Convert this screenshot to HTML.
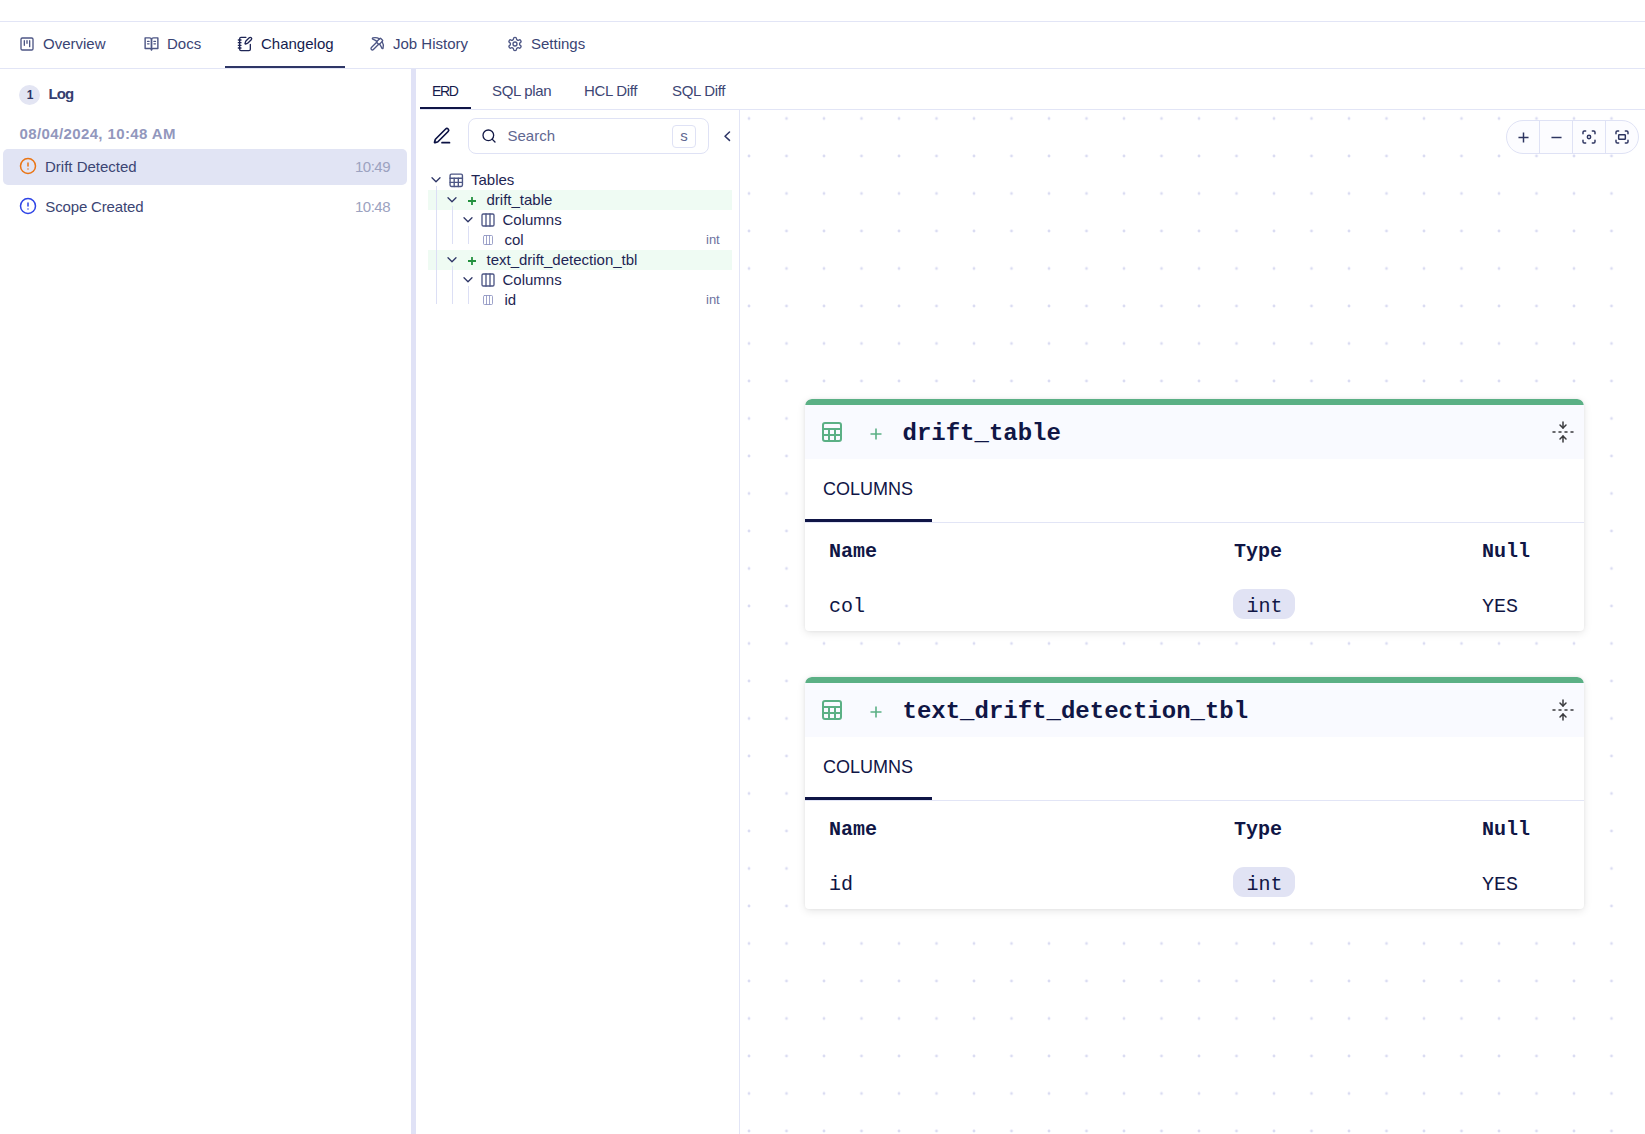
<!DOCTYPE html>
<html><head><meta charset="utf-8">
<style>
html,body{margin:0;padding:0;}
body{width:1645px;height:1134px;overflow:hidden;background:#fff;position:relative;font-family:"Liberation Sans",sans-serif;}
.a{position:absolute;white-space:nowrap;}
.hl{position:absolute;height:1px;background:#e2e5f6;}
.vl{position:absolute;width:1px;background:#e2e5f6;}
.nav{font-size:15px;line-height:15px;color:#3a4474;}
.ico{position:absolute;}
svg{display:block;overflow:visible;}
.sub{font-size:15px;line-height:15px;color:#3d4674;letter-spacing:-0.35px;}
.li{font-size:15px;line-height:15px;color:#3b4573;}
.tm{font-size:15px;line-height:15px;color:#9ca2c0;width:100px;text-align:right;letter-spacing:-0.5px;}
.tr{font-size:15px;line-height:15px;color:#1e2553;}
.mono{font-family:"Liberation Mono",monospace;}
.card{background:#fff;border-radius:7px 7px 4px 4px;box-shadow:0 2px 9px rgba(0,0,0,0.10),0 0 3px rgba(0,0,0,0.06);overflow:hidden;}
</style></head>
<body>
<!-- top lines -->
<div class="hl" style="left:0;top:21px;width:1645px;"></div>
<div class="hl" style="left:0;top:68px;width:1645px;"></div>

<!-- NAV -->
<div class="ico" style="left:19px;top:36px;"><svg width="16" height="16" viewBox="0 0 24 24" fill="none" stroke="#4d5685" stroke-width="2" stroke-linecap="round" stroke-linejoin="round"><rect width="18" height="18" x="3" y="3" rx="2"/><path d="M8 7v7"/><path d="M12 7v4"/><path d="M16 7v9"/></svg></div>
<div class="a nav" style="left:43px;top:35.5px;">Overview</div>

<div class="ico" style="left:142.5px;top:35px;"><svg width="17" height="17" viewBox="0 0 24 24" fill="none" stroke="#4d5685" stroke-width="2" stroke-linecap="round" stroke-linejoin="round"><path d="M3 4h6a3 3 0 0 1 3 3v14a2 2 0 0 0-2-2H3z"/><path d="M21 4h-6a3 3 0 0 0-3 3v14a2 2 0 0 1 2-2h7z"/><path d="M6.5 9h2"/><path d="M6.5 12.5h2"/><path d="M15.5 9h2"/><path d="M15.5 12.5h2"/></svg></div>
<div class="a nav" style="left:167px;top:35.5px;">Docs</div>

<div class="ico" style="left:237px;top:36px;"><svg width="16" height="16" viewBox="0 0 24 24" fill="none" stroke="#1f2656" stroke-width="2" stroke-linecap="round" stroke-linejoin="round"><path d="M13.4 2H6a2 2 0 0 0-2 2v16a2 2 0 0 0 2 2h12a2 2 0 0 0 2-2v-7.4"/><path d="M2 6h4"/><path d="M2 10h4"/><path d="M2 14h4"/><path d="M2 18h4"/><path d="M21.378 5.626a1 1 0 1 0-3.004-3.004l-5.01 5.012a2 2 0 0 0-.506.854l-.837 2.87a.5.5 0 0 0 .62.62l2.87-.837a2 2 0 0 0 .854-.506z"/></svg></div>
<div class="a nav" style="left:261px;top:35.5px;color:#151c4e;">Changelog</div>
<div class="a" style="left:225px;top:66px;width:120px;height:2px;background:#2e3666;"></div>

<div class="ico" style="left:369px;top:36px;"><svg width="16" height="16" viewBox="0 0 24 24" fill="none" stroke="#4d5685" stroke-width="2" stroke-linecap="round" stroke-linejoin="round"><path d="M14.531 12.469 6.619 20.38a1 1 0 1 1-3-3l7.912-7.912"/><path d="M15.686 4.314A12.5 12.5 0 0 0 5.461 2.958 1 1 0 0 0 5.58 4.71a22 22 0 0 1 6.318 3.393"/><path d="M17.7 3.7a1 1 0 0 0-1.4 0l-4.6 4.6a1 1 0 0 0 0 1.4l2.6 2.6a1 1 0 0 0 1.4 0l4.6-4.6a1 1 0 0 0 0-1.4z"/><path d="M19.686 8.314a12.501 12.501 0 0 1 1.356 10.225 1 1 0 0 1-1.751-.119 22 22 0 0 0-3.393-6.319"/></svg></div>
<div class="a nav" style="left:393px;top:35.5px;">Job History</div>

<div class="ico" style="left:507px;top:36px;"><svg width="16" height="16" viewBox="0 0 24 24" fill="none" stroke="#4d5685" stroke-width="2" stroke-linecap="round" stroke-linejoin="round"><path d="M12.22 2h-.44a2 2 0 0 0-2 2v.18a2 2 0 0 1-1 1.73l-.43.25a2 2 0 0 1-2 0l-.15-.08a2 2 0 0 0-2.730.73l-.22.38a2 2 0 0 0 .73 2.73l.15.1a2 2 0 0 1 1 1.72v.51a2 2 0 0 1-1 1.74l-.15.09a2 2 0 0 0-.73 2.73l.22.38a2 2 0 0 0 2.73.73l.15-.08a2 2 0 0 1 2 0l.43.25a2 2 0 0 1 1 1.73V20a2 2 0 0 0 2 2h.44a2 2 0 0 0 2-2v-.18a2 2 0 0 1 1-1.73l.43-.25a2 2 0 0 1 2 0l.15.08a2 2 0 0 0 2.73-.73l.22-.39a2 2 0 0 0-.73-2.73l-.15-.08a2 2 0 0 1-1-1.74v-.5a2 2 0 0 1 1-1.74l.15-.09a2 2 0 0 0 .73-2.73l-.22-.38a2 2 0 0 0-2.73-.73l-.15.08a2 2 0 0 1-2 0l-.43-.25a2 2 0 0 1-1-1.73V4a2 2 0 0 0-2-2z"/><circle cx="12" cy="12" r="3"/></svg></div>
<div class="a nav" style="left:531px;top:35.5px;">Settings</div>

<!-- LEFT PANEL -->
<div class="a" style="left:19px;top:85px;width:21px;height:20px;border-radius:50%;background:#e3e5f3;"></div>
<div class="a" style="left:20px;top:89px;width:20px;text-align:center;font-size:12px;line-height:12px;font-weight:bold;color:#2d3566;">1</div>
<div class="a" style="left:48.5px;top:86px;font-size:15px;line-height:15px;font-weight:bold;color:#353e6f;letter-spacing:-0.9px;">Log</div>
<div class="a" style="left:19.5px;top:126px;font-size:15px;line-height:15px;font-weight:bold;color:#9297bd;letter-spacing:0.38px;">08/04/2024, 10:48 AM</div>

<div class="a" style="left:3px;top:149px;width:404px;height:36px;border-radius:5px;background:#e1e4f4;"></div>
<div class="ico" style="left:19px;top:157px;"><svg width="18" height="18" viewBox="0 0 24 24" fill="none" stroke="#ea7413" stroke-width="2" stroke-linecap="round" stroke-linejoin="round"><circle cx="12" cy="12" r="10"/><line x1="12" x2="12" y1="8" y2="12"/><line x1="12" x2="12.01" y1="16" y2="16"/></svg></div>
<div class="a li" style="left:45px;top:158.6px;">Drift Detected</div>
<div class="a tm" style="left:290px;top:158.8px;">10:49</div>

<div class="ico" style="left:19px;top:197px;"><svg width="18" height="18" viewBox="0 0 24 24" fill="none" stroke="#2e44e6" stroke-width="2" stroke-linecap="round" stroke-linejoin="round"><circle cx="12" cy="12" r="10"/><line x1="12" x2="12" y1="8" y2="12"/><line x1="12" x2="12.01" y1="16" y2="16"/></svg></div>
<div class="a li" style="left:45.3px;top:198.6px;letter-spacing:-0.15px;">Scope Created</div>
<div class="a tm" style="left:290px;top:198.8px;">10:48</div>

<!-- splitter -->
<div class="a" style="left:411px;top:69px;width:5px;height:1065px;background:#e0e2f6;"></div>

<!-- SUB TABS -->
<div class="hl" style="left:420px;top:109px;width:1225px;"></div>
<div class="a sub" style="left:432px;top:83.8px;color:#151b4b;font-size:14px;letter-spacing:-1.3px;">ERD</div>
<div class="a" style="left:420px;top:107px;width:51px;height:2px;background:#0f1546;"></div>
<div class="a sub" style="left:492px;top:83.3px;">SQL plan</div>
<div class="a sub" style="left:584px;top:83.3px;">HCL Diff</div>
<div class="a sub" style="left:672px;top:83.3px;">SQL Diff</div>

<!-- TREE PANEL -->
<div class="vl" style="left:739px;top:110px;height:1024px;"></div>
<div class="ico" style="left:432px;top:125.5px;"><svg width="20" height="20" viewBox="0 0 24 24" fill="none" stroke="#0c1244" stroke-width="2" stroke-linecap="round" stroke-linejoin="round"><path d="M12 20h9"/><path d="M16.376 3.622a1 1 0 0 1 3.002 3.002L7.368 18.635a2 2 0 0 1-.855.506l-2.872.838a.5.5 0 0 1-.62-.62l.838-2.872a2 2 0 0 1 .506-.854z"/></svg></div>
<div class="a" style="left:468px;top:118px;width:239px;height:34px;border:1px solid #dfe2f5;border-radius:8px;"></div>
<div class="ico" style="left:480.7px;top:127.6px;"><svg width="16" height="16" viewBox="0 0 24 24" fill="none" stroke="#141a46" stroke-width="2" stroke-linecap="round" stroke-linejoin="round"><circle cx="11" cy="11" r="8"/><path d="m21 21-4.3-4.3"/></svg></div>
<div class="a" style="left:507.5px;top:128px;font-size:15px;line-height:15px;color:#5f6791;">Search</div>
<div class="a" style="left:672px;top:125px;width:22px;height:21px;border:1px solid #dfe2f5;border-radius:4px;"></div>
<div class="a" style="left:672px;top:128px;width:24px;text-align:center;font-size:15px;line-height:15px;color:#5f6791;">s</div>
<div class="ico" style="left:722px;top:131px;"><svg width="10" height="10" viewBox="0 0 10 10" fill="none" stroke="#2d3566" stroke-width="1.5" stroke-linecap="round" stroke-linejoin="round"><path d="M7.5 1 3 5.2 7.5 9.4"/></svg></div>

<div class="a" style="left:428px;top:190px;width:304px;height:20px;background:#effbf3;"></div>
<div class="a" style="left:428px;top:250px;width:304px;height:20px;background:#effbf3;"></div>
<div class="vl" style="left:436px;top:186px;height:118px;background:#dcdff5;"></div>
<div class="vl" style="left:452px;top:206px;height:38px;background:#dcdff5;"></div>
<div class="vl" style="left:468px;top:226px;height:18px;background:#dcdff5;"></div>
<div class="vl" style="left:452px;top:266px;height:38px;background:#dcdff5;"></div>
<div class="vl" style="left:468px;top:286px;height:18px;background:#dcdff5;"></div>
<div class="ico" style="left:431px;top:177px;"><svg width="10" height="6" viewBox="0 0 10 6" fill="none" stroke="#2d3566" stroke-width="1.3" stroke-linecap="round" stroke-linejoin="round"><path d="M1 0.8 5 4.8 9 0.8"/></svg></div>
<div class="ico" style="left:447.8px;top:171.6px;"><svg width="16.5" height="16.5" viewBox="0 0 24 24" fill="none" stroke="#4d5685" stroke-width="2" stroke-linecap="round" stroke-linejoin="round"><rect width="18" height="18" x="3" y="3" rx="2"/><path d="M3 9h18"/><path d="M3 15h18"/><path d="M9 9v12"/><path d="M15 9v12"/></svg></div>
<div class="a tr" style="left:471px;top:172px;">Tables</div>
<div class="ico" style="left:447px;top:197px;"><svg width="10" height="6" viewBox="0 0 10 6" fill="none" stroke="#2d3566" stroke-width="1.3" stroke-linecap="round" stroke-linejoin="round"><path d="M1 0.8 5 4.8 9 0.8"/></svg></div>
<div class="ico" style="left:468px;top:197px;"><svg width="8" height="8" viewBox="0 0 8 8" fill="none" stroke="#23913f" stroke-width="1.8"><path d="M4 0v8M0 4h8"/></svg></div>
<div class="a tr" style="left:486.5px;top:192px;">drift_table</div>
<div class="ico" style="left:463px;top:217px;"><svg width="10" height="6" viewBox="0 0 10 6" fill="none" stroke="#2d3566" stroke-width="1.3" stroke-linecap="round" stroke-linejoin="round"><path d="M1 0.8 5 4.8 9 0.8"/></svg></div>
<div class="ico" style="left:480px;top:211.8px;"><svg width="16" height="16" viewBox="0 0 24 24" fill="none" stroke="#4d5685" stroke-width="2" stroke-linecap="round" stroke-linejoin="round"><rect width="18" height="18" x="3" y="3" rx="2"/><path d="M9 3v18"/><path d="M15 3v18"/></svg></div>
<div class="a tr" style="left:502.5px;top:212px;">Columns</div>
<div class="ico" style="left:482px;top:234px;"><svg width="12" height="12" viewBox="0 0 24 24" fill="none" stroke="#8d92c0" stroke-width="1.7" stroke-linecap="round" stroke-linejoin="round"><rect width="18" height="18" x="3" y="3" rx="2"/><path d="M9 3v18"/><path d="M15 3v18"/></svg></div>
<div class="a tr" style="left:504.5px;top:232px;">col</div>
<div class="a" style="left:706px;top:233px;font-size:13px;line-height:13px;color:#6c72a0;">int</div>
<div class="ico" style="left:447px;top:257px;"><svg width="10" height="6" viewBox="0 0 10 6" fill="none" stroke="#2d3566" stroke-width="1.3" stroke-linecap="round" stroke-linejoin="round"><path d="M1 0.8 5 4.8 9 0.8"/></svg></div>
<div class="ico" style="left:468px;top:257px;"><svg width="8" height="8" viewBox="0 0 8 8" fill="none" stroke="#23913f" stroke-width="1.8"><path d="M4 0v8M0 4h8"/></svg></div>
<div class="a tr" style="left:486.5px;top:252px;">text_drift_detection_tbl</div>
<div class="ico" style="left:463px;top:277px;"><svg width="10" height="6" viewBox="0 0 10 6" fill="none" stroke="#2d3566" stroke-width="1.3" stroke-linecap="round" stroke-linejoin="round"><path d="M1 0.8 5 4.8 9 0.8"/></svg></div>
<div class="ico" style="left:480px;top:271.8px;"><svg width="16" height="16" viewBox="0 0 24 24" fill="none" stroke="#4d5685" stroke-width="2" stroke-linecap="round" stroke-linejoin="round"><rect width="18" height="18" x="3" y="3" rx="2"/><path d="M9 3v18"/><path d="M15 3v18"/></svg></div>
<div class="a tr" style="left:502.5px;top:272px;">Columns</div>
<div class="ico" style="left:482px;top:294px;"><svg width="12" height="12" viewBox="0 0 24 24" fill="none" stroke="#8d92c0" stroke-width="1.7" stroke-linecap="round" stroke-linejoin="round"><rect width="18" height="18" x="3" y="3" rx="2"/><path d="M9 3v18"/><path d="M15 3v18"/></svg></div>
<div class="a tr" style="left:504.5px;top:292px;">id</div>
<div class="a" style="left:706px;top:293px;font-size:13px;line-height:13px;color:#6c72a0;">int</div>

<!-- CANVAS -->
<div id="canvas" class="a" style="left:740px;top:110px;width:905px;height:1024px;">
<svg width="905" height="1024" style="position:absolute;left:0;top:0;"><defs><pattern id="dots" x="9" y="8.5" width="37.5" height="37.5" patternUnits="userSpaceOnUse"><circle cx="0" cy="0" r="1.4" fill="#dadcf2"/><circle cx="37.5" cy="0" r="1.4" fill="#dadcf2"/><circle cx="0" cy="37.5" r="1.4" fill="#dadcf2"/><circle cx="37.5" cy="37.5" r="1.4" fill="#dadcf2"/></pattern></defs><rect width="905" height="1024" fill="url(#dots)"/></svg>
</div>
<div class="a" style="left:1506px;top:120px;width:131px;height:32px;border:1px solid #dfe2f5;border-radius:17px;background:#fcfcff;"></div>
<div class="vl" style="left:1539px;top:121px;height:32px;background:#dfe2f5;"></div>
<div class="vl" style="left:1572px;top:121px;height:32px;background:#dfe2f5;"></div>
<div class="vl" style="left:1605px;top:121px;height:32px;background:#dfe2f5;"></div>
<div class="ico" style="left:1517.5px;top:131.5px;"><svg width="11" height="11" viewBox="0 0 12 12" fill="none" stroke="#2d3460" stroke-width="1.6"><path d="M6 0.5v11M0.5 6h11"/></svg></div>
<div class="ico" style="left:1550.5px;top:131.5px;"><svg width="11" height="11" viewBox="0 0 12 12" fill="none" stroke="#2d3460" stroke-width="1.6"><path d="M0.5 6h11"/></svg></div>
<div class="ico" style="left:1581px;top:129px;"><svg width="16" height="16" viewBox="0 0 24 24" fill="none" stroke="#2d3460" stroke-width="2.2" stroke-linecap="round" stroke-linejoin="round"><circle cx="12" cy="12" r="2.5"/><path d="M3 7V5a2 2 0 0 1 2-2h2"/><path d="M17 3h2a2 2 0 0 1 2 2v2"/><path d="M21 17v2a2 2 0 0 1-2 2h-2"/><path d="M7 21H5a2 2 0 0 1-2-2v-2"/></svg></div>
<div class="ico" style="left:1614px;top:129px;"><svg width="16" height="16" viewBox="0 0 24 24" fill="none" stroke="#2d3460" stroke-width="2.2" stroke-linecap="round" stroke-linejoin="round"><path d="M3 7V5a2 2 0 0 1 2-2h2"/><path d="M17 3h2a2 2 0 0 1 2 2v2"/><path d="M21 17v2a2 2 0 0 1-2 2h-2"/><path d="M7 21H5a2 2 0 0 1-2-2v-2"/><rect width="10" height="7" x="7" y="8.5" rx="1"/></svg></div>
<div class="a card" style="left:805px;top:399px;width:779px;height:232px;">
<div class="a" style="left:0;top:0;width:779px;height:6px;background:#5bb085;border-radius:7px 7px 0 0;"></div>
<div class="a" style="left:0;top:6px;width:779px;height:54px;background:#f9faff;"></div>
<div class="ico" style="left:14.7px;top:20.9px;"><svg width="24" height="24" viewBox="0 0 24 24" fill="none" stroke="#5bb085" stroke-width="2" stroke-linecap="round" stroke-linejoin="round"><rect width="18" height="18" x="3" y="3" rx="2"/><path d="M3 9h18"/><path d="M3 15h18"/><path d="M9 9v12"/><path d="M15 9v12"/></svg></div>
<div class="ico" style="left:64.7px;top:29px;"><svg width="12" height="12" viewBox="0 0 12 12" fill="none" stroke="#5bb085" stroke-width="1.6"><path d="M6 0.5v11M0.5 6h11"/></svg></div>
<div class="a mono" style="left:97.5px;top:23px;font-size:24px;line-height:24px;font-weight:bold;color:#101645;">drift_table</div>
<div class="ico" style="left:746.1px;top:21px;"><svg width="24" height="24" viewBox="0 0 24 24" fill="none" stroke="#3a3a3e" stroke-width="1.5" stroke-linecap="round" stroke-linejoin="round"><path d="M12 22v-6"/><path d="M12 8V2"/><path d="M4 12H2"/><path d="M10 12H8"/><path d="M16 12h-2"/><path d="M22 12h-2"/><path d="m15 19-3-3-3 3"/><path d="m15 5-3 3-3-3"/></svg></div>
<div class="a" style="left:18px;top:80.5px;font-size:18px;line-height:18px;color:#0f1546;">COLUMNS</div>
<div class="a" style="left:0;top:123px;width:779px;height:1px;background:#e2e5f6;"></div>
<div class="a" style="left:0;top:120px;width:127px;height:3px;background:#0f1546;"></div>
<div class="a mono" style="left:24px;top:143px;font-size:20px;line-height:20px;font-weight:bold;color:#101645;">Name</div>
<div class="a mono" style="left:429px;top:143px;font-size:20px;line-height:20px;font-weight:bold;color:#101645;">Type</div>
<div class="a mono" style="left:677px;top:143px;font-size:20px;line-height:20px;font-weight:bold;color:#101645;">Null</div>
<div class="a mono" style="left:24px;top:198px;font-size:20px;line-height:20px;color:#101645;">col</div>
<div class="a" style="left:428px;top:190px;width:62px;height:30px;border-radius:11px;background:#e1e3f4;"></div>
<div class="a mono" style="left:441.5px;top:198px;font-size:20px;line-height:20px;color:#101645;">int</div>
<div class="a mono" style="left:677px;top:198px;font-size:20px;line-height:20px;color:#101645;">YES</div>
</div>
<div class="a card" style="left:805px;top:677px;width:779px;height:232px;">
<div class="a" style="left:0;top:0;width:779px;height:6px;background:#5bb085;border-radius:7px 7px 0 0;"></div>
<div class="a" style="left:0;top:6px;width:779px;height:54px;background:#f9faff;"></div>
<div class="ico" style="left:14.7px;top:20.9px;"><svg width="24" height="24" viewBox="0 0 24 24" fill="none" stroke="#5bb085" stroke-width="2" stroke-linecap="round" stroke-linejoin="round"><rect width="18" height="18" x="3" y="3" rx="2"/><path d="M3 9h18"/><path d="M3 15h18"/><path d="M9 9v12"/><path d="M15 9v12"/></svg></div>
<div class="ico" style="left:64.7px;top:29px;"><svg width="12" height="12" viewBox="0 0 12 12" fill="none" stroke="#5bb085" stroke-width="1.6"><path d="M6 0.5v11M0.5 6h11"/></svg></div>
<div class="a mono" style="left:97.5px;top:23px;font-size:24px;line-height:24px;font-weight:bold;color:#101645;">text_drift_detection_tbl</div>
<div class="ico" style="left:746.1px;top:21px;"><svg width="24" height="24" viewBox="0 0 24 24" fill="none" stroke="#3a3a3e" stroke-width="1.5" stroke-linecap="round" stroke-linejoin="round"><path d="M12 22v-6"/><path d="M12 8V2"/><path d="M4 12H2"/><path d="M10 12H8"/><path d="M16 12h-2"/><path d="M22 12h-2"/><path d="m15 19-3-3-3 3"/><path d="m15 5-3 3-3-3"/></svg></div>
<div class="a" style="left:18px;top:80.5px;font-size:18px;line-height:18px;color:#0f1546;">COLUMNS</div>
<div class="a" style="left:0;top:123px;width:779px;height:1px;background:#e2e5f6;"></div>
<div class="a" style="left:0;top:120px;width:127px;height:3px;background:#0f1546;"></div>
<div class="a mono" style="left:24px;top:143px;font-size:20px;line-height:20px;font-weight:bold;color:#101645;">Name</div>
<div class="a mono" style="left:429px;top:143px;font-size:20px;line-height:20px;font-weight:bold;color:#101645;">Type</div>
<div class="a mono" style="left:677px;top:143px;font-size:20px;line-height:20px;font-weight:bold;color:#101645;">Null</div>
<div class="a mono" style="left:24px;top:198px;font-size:20px;line-height:20px;color:#101645;">id</div>
<div class="a" style="left:428px;top:190px;width:62px;height:30px;border-radius:11px;background:#e1e3f4;"></div>
<div class="a mono" style="left:441.5px;top:198px;font-size:20px;line-height:20px;color:#101645;">int</div>
<div class="a mono" style="left:677px;top:198px;font-size:20px;line-height:20px;color:#101645;">YES</div>
</div>

</body></html>
